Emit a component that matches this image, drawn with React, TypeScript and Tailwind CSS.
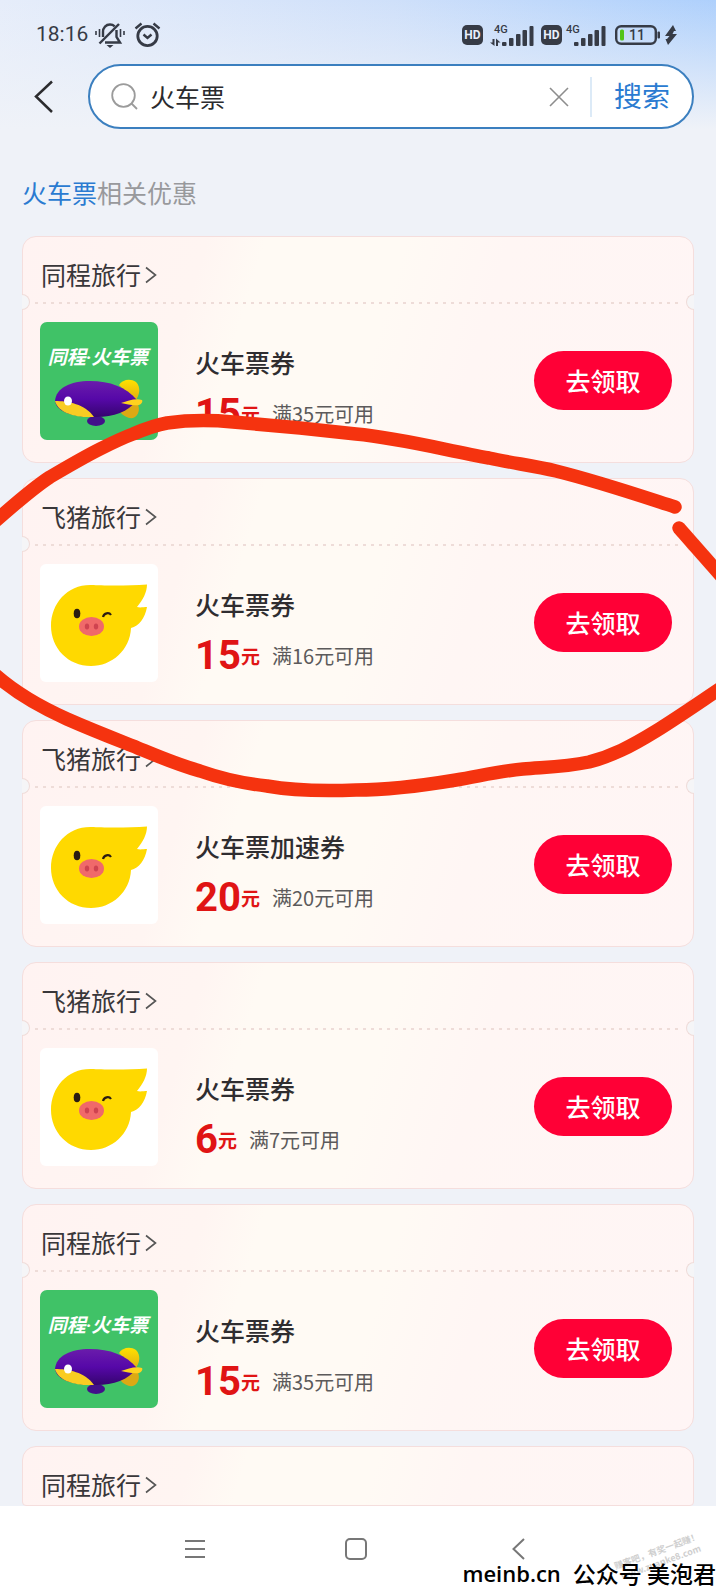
import { useState } from 'react';

type Brand = 'tongcheng' | 'fliggy';

type Coupon = {
  id: number;
  brand: Brand;
  title: string;
  amount: number;
  threshold: number;
};

const BRAND_NAMES: Record<Brand, string> = {
  tongcheng: '同程旅行',
  fliggy: '飞猪旅行',
};

const COUPONS: Coupon[] = [
  { id: 1, brand: 'tongcheng', title: '火车票券', amount: 15, threshold: 35 },
  { id: 2, brand: 'fliggy', title: '火车票券', amount: 15, threshold: 16 },
  { id: 3, brand: 'fliggy', title: '火车票加速券', amount: 20, threshold: 20 },
  { id: 4, brand: 'fliggy', title: '火车票券', amount: 6, threshold: 7 },
  { id: 5, brand: 'tongcheng', title: '火车票券', amount: 15, threshold: 35 },
];

const CARD =
  'relative border border-[#f5dedd] bg-[linear-gradient(107deg,#fff3f2_0%,#fff5f2_25%,#fffaf4_33%,#fffaf4_52%,#fff6f4_66%,#fff5f5_100%)]';

function MutedBell() {
  return (
    <svg width="30" height="26" viewBox="0 0 30 26" fill="none" stroke="#363b46" strokeWidth="2.400" aria-hidden="true">
      <path d="M8 15V10C8 5.500 11 2.500 15 2.500C17 2.500 18.500 3.200 19.700 4.300M21.500 8V15L25 20.500H10" />
      <path d="M4.500 21.500L24 2" strokeWidth="2.400" />
      <path d="M11.500 23H18.500L15 26Z" fill="#363b46" stroke="none" />
      <path d="M1 9V13M4.500 7V15M25.500 7V15M29 9V13" strokeWidth="1.600" />
    </svg>
  );
}

function AlarmIcon() {
  return (
    <svg width="27" height="26" viewBox="0 0 27 26" fill="none" stroke="#363b46" strokeWidth="2.800" aria-hidden="true">
      <circle cx="13.500" cy="14" r="9.700" />
      <path d="M9.500 12.500L13.500 16L17.500 12.500" strokeWidth="2.400" />
      <path d="M1.500 6.500L7.500 1.500M25.500 6.500L19.500 1.500" strokeWidth="2.400" />
    </svg>
  );
}

function HdBadge() {
  return (
    <span className="flex h-5 w-[21px] items-center justify-center rounded-[5px] bg-[#363b46] text-[12px] font-bold text-[#e9f0fc]">
      HD
    </span>
  );
}

function Signal({ data = false }: { data?: boolean }) {
  return (
    <svg width="44" height="24" viewBox="0 0 44 24" fill="#363b46" aria-hidden="true">
      <text x="4" y="10" fontSize="11" fontFamily="Roboto, sans-serif" fontWeight="500">
        4G
      </text>
      {data && <path d="M2.500 16H4.500V23L0 19.500H2.500ZM6 23V15.500L10.500 19.500H8V23Z" />}
      <rect x="12" y="19" width="4.500" height="4" rx="1" />
      <rect x="19" y="15" width="4.500" height="8" rx="1" />
      <rect x="26" y="11" width="4.500" height="12" rx="1" />
      <rect x="32.500" y="7" width="4.500" height="16" rx="1" />
      <rect x="39.500" y="3" width="4" height="20" rx="1" />
    </svg>
  );
}

function Battery() {
  return (
    <svg width="46" height="20" viewBox="0 0 46 20" aria-hidden="true">
      <rect x="1.200" y="1.200" width="39.600" height="17.600" rx="5" fill="none" stroke="#363b46" strokeWidth="2.400" />
      <rect x="5" y="4.500" width="4" height="11" rx="1.500" fill="#52c41a" />
      <rect x="42.500" y="6.500" width="2.500" height="7" rx="1" fill="#363b46" />
      <text x="22" y="15" fontSize="14" fontFamily="Roboto, sans-serif" fontWeight="500" textAnchor="middle" fill="#363b46">
        11
      </text>
    </svg>
  );
}

function StatusBar() {
  return (
    <div className="flex h-16 items-center justify-between pt-1.5 pr-[39px] pl-9 font-['Roboto',sans-serif] text-[#363b46]">
      <div className="flex items-center">
        <span className="w-[59px] text-[21px]">18:16</span>
        <MutedBell />
        <span className="ml-[9px]">
          <AlarmIcon />
        </span>
      </div>
      <div className="flex items-center">
        <HdBadge />
        <span className="mx-[7px]">
          <Signal data />
        </span>
        <HdBadge />
        <span className="mr-[9px]">
          <Signal />
        </span>
        <Battery />
        <svg className="ml-1" width="12" height="20" viewBox="0 0 12 20" fill="#363b46" aria-hidden="true">
          <path d="M8 0L0 11H4.500L2 14H0.500L3 20L12 9H7.500L9 6H11Z" />
        </svg>
      </div>
    </div>
  );
}

function SearchBar() {
  const [query, setQuery] = useState('火车票');

  return (
    <div className="flex items-center pr-[22px] pl-[34px]">
      <button type="button" aria-label="返回" className="w-[54px] shrink-0">
        <svg width="20" height="34" viewBox="0 0 20 34" fill="none" stroke="#2b2b2e" strokeWidth="2.500">
          <path d="M18 1.500L2 16.500L18 32" />
        </svg>
      </button>
      <form
        role="search"
        onSubmit={(e) => e.preventDefault()}
        className="flex h-[65px] min-w-0 flex-1 items-center rounded-full border-2 border-[#3b7fbf] bg-white pl-[21px]"
      >
        <svg className="shrink-0" width="27" height="27" viewBox="0 0 27 27" fill="none" stroke="#9b9b9b" strokeWidth="1.800" aria-hidden="true">
          <circle cx="12.500" cy="12.500" r="11.300" />
          <path d="M20.500 20.500L26 26" />
        </svg>
        <input
          aria-label="搜索内容"
          value={query}
          onChange={(e) => setQuery(e.target.value)}
          className="ml-3 min-w-0 flex-1 text-[25px] text-[#2b2b2e] outline-none"
        />
        <button type="button" aria-label="清除" onClick={() => setQuery('')} className="mr-[21px]">
          <svg width="20" height="20" viewBox="0 0 20 20" stroke="#8d8d8d" strokeWidth="1.600">
            <path d="M1 1L19 19M19 1L1 19" />
          </svg>
        </button>
        <button type="submit" className="h-10 border-l-2 border-[#dceaf7] pr-[22px] pb-1 pl-[22px] text-[28px] leading-9 text-[#2a7bd1]">
          搜索
        </button>
      </form>
    </div>
  );
}

function TongchengLogo() {
  return (
    <svg className="size-[118px] shrink-0" viewBox="0 0 118 118" role="img" aria-label="同程火车票">
      <defs>
        <linearGradient id="blimp" x1="0" y1="0" x2="0" y2="1">
          <stop offset="0" stopColor="#6a1cab" />
          <stop offset="0.500" stopColor="#5608a8" />
          <stop offset="1" stopColor="#35046f" />
        </linearGradient>
        <linearGradient id="fin" x1="0" y1="0" x2="0" y2="1">
          <stop offset="0" stopColor="#ffe100" />
          <stop offset="1" stopColor="#e0ad12" />
        </linearGradient>
      </defs>
      <rect width="118" height="118" rx="7" fill="#40c267" />
      <text
        x="58"
        y="42"
        textAnchor="middle"
        fontSize="19"
        fontWeight="700"
        fontStyle="italic"
        fontFamily="Roboto, 'Noto Sans CJK SC', sans-serif"
        fill="#fff"
      >
        同程·火车票
      </text>
      <path d="M79 63C82 58 90 56 96 60C101 65 100 73 95 79Z" fill="url(#fin)" />
      <path d="M80 90C86 97 94 98 97 93C100 89 99 84 97 80Z" fill="#dca914" />
      <ellipse cx="56" cy="99" rx="9" ry="5" fill="#42108a" />
      <path d="M15 79C16 66 30 59 50 59C70 59 86 65 97 78C88 90 74 95 56 95C34 95 17 91 15 79Z" fill="url(#blimp)" />
      <path d="M15 79C28 79 45 82 54 95C36 96 18 91 15 79Z" fill="#f9cc22" />
      <path d="M81 81C88 79 95 76 102 78C103 79 102 82 99 83C93 84 87 82 81 81Z" fill="#ffd21f" />
      <ellipse cx="28" cy="79" rx="4" ry="4.500" fill="#fff" />
    </svg>
  );
}

function FliggyLogo() {
  return (
    <svg className="size-[118px] shrink-0" viewBox="0 0 118 118" role="img" aria-label="飞猪">
      <rect width="118" height="118" rx="6" fill="#fff" />
      <path
        d="M11 62C11 39 28 20 52 21C60 21.500 88 22 107 20.500C107 28 103 36 97 43C100 44 104 43 107 43C105 54 99 62 91 64C90 86 72 102 51 102C28 102 11 84 11 62Z"
        fill="#ffd900"
      />
      <ellipse cx="37" cy="49.500" rx="3.300" ry="4.800" fill="#2a1c12" />
      <path d="M63 53C64 49 69 48 71 51" fill="none" stroke="#2a1c12" strokeWidth="2.200" />
      <ellipse cx="51.500" cy="62.500" rx="12.500" ry="9.500" fill="#f0696a" />
      <ellipse cx="47" cy="62.500" rx="2.200" ry="3" fill="#cf4350" />
      <ellipse cx="56" cy="62.500" rx="2.200" ry="3" fill="#cf4350" />
    </svg>
  );
}

function BrandLink({ brand }: { brand: Brand }) {
  return (
    <a href="#" className="flex h-[65px] items-center pt-[11px] pl-[18px] text-[25px] text-[#39373a]">
      {BRAND_NAMES[brand]}
      <svg className="ml-1" width="12" height="18" viewBox="0 0 12 18" fill="none" stroke="#555" strokeWidth="1.600" aria-hidden="true">
        <path d="M1 1.500L10.500 9L1 16.500" />
      </svg>
    </a>
  );
}

function CouponCard({ coupon }: { coupon: Coupon }) {
  return (
    <article className={`${CARD} rounded-[14px]`}>
      <BrandLink brand={coupon.brand} />
      <div className="mx-3 h-0.5 bg-[repeating-linear-gradient(90deg,#eedcd8_0_3px,transparent_3px_8px)]" />
      <span className="absolute top-[57px] -left-px h-4 w-2 rounded-r-full border border-l-0 border-[#efdcd9] bg-[#f5f5f7]" />
      <span className="absolute top-[57px] -right-px h-4 w-2 rounded-l-full border border-r-0 border-[#efdcd9] bg-[#f5f5f7]" />

      <div className="flex h-[158px] items-center pr-[21px] pb-[5px] pl-[17px]">
        {coupon.brand === 'fliggy' ? <FliggyLogo /> : <TongchengLogo />}
        <div className="mt-[18px] ml-[37px] flex-1">
          <h2 className="text-[25px] leading-8 font-medium text-[#2f2d30]">{coupon.title}</h2>
          <p className="mt-4 flex items-center leading-10">
            <span className="font-['Roboto',sans-serif] text-[40px] font-bold text-[#e01414]">{coupon.amount}</span>
            <span className="text-[19px] font-bold text-[#e01414]">元</span>
            <span className="ml-3 text-[20px] text-[#5c5a5b]">满{coupon.threshold}元可用</span>
          </p>
        </div>
        <button type="button" className="h-[59px] w-[138px] shrink-0 rounded-full bg-[#ff0036] text-[25px] font-medium text-white">
          去领取
        </button>
      </div>
    </article>
  );
}

function NavBar() {
  return (
    <nav className="relative h-[87px] overflow-hidden bg-white">
      <div className="flex justify-around pt-8 pr-[117px] pl-[114px]">
        <button type="button" aria-label="菜单">
          <svg width="22" height="22" viewBox="0 0 22 22" stroke="#777" strokeWidth="2">
            <path d="M1 3H21M1 11H21M1 19H21" />
          </svg>
        </button>
        <button type="button" aria-label="主页">
          <svg width="22" height="22" viewBox="0 0 22 22" fill="none" stroke="#777" strokeWidth="2">
            <rect x="1" y="1" width="20" height="20" rx="4" />
          </svg>
        </button>
        <button type="button" aria-label="后退">
          <svg width="22" height="22" viewBox="0 0 22 22" fill="none" stroke="#777" strokeWidth="2">
            <path d="M17 1L6.500 11L17 21" />
          </svg>
        </button>
      </div>
      <p className="absolute right-3 bottom-6 -rotate-[20deg] text-center text-[9px] leading-3 font-bold text-[#cfcfcf]">
        赚客吧，有奖一起赚！
        <br />
        www.zuanke8.com
      </p>
      <p className="absolute right-0 bottom-0 flex gap-3 text-[23px] leading-10 font-medium whitespace-nowrap text-black">
        <span className="font-['Open_Sans',sans-serif] text-[22px] font-semibold">meinb.cn</span>
        <span>公众号 美泡君</span>
      </p>
    </nav>
  );
}

// Freehand marker loop around the second coupon
function MarkerLoop() {
  return (
    <svg
      className="pointer-events-none absolute top-0 left-0 w-full"
      viewBox="0 0 716 1593"
      fill="none"
      stroke="#f5330f"
      strokeWidth="13.500"
      strokeLinecap="round"
      strokeLinejoin="round"
      aria-hidden="true"
    >
      <path d="M-8 524C12 507 30 490 50 477C67 467 84 457 100 449C112 443 122 438 133 434C145 429 156 425 167 423C189 420 211 420 233 422C256 424 278 426 300 428L356 434C400 438 445 450 489 458C512 463 535 466 556 471C600 482 635 494 675 507" />
      <path d="M679 528L724 579" />
      <path d="M724 686C700 702 680 716 656 731C630 747 612 756 589 762C565 767 548 767 523 769C500 771 480 776 456 780C420 786 390 790 356 790C330 791 295 791 267 786C240 783 220 778 200 771C175 764 155 755 133 746C105 735 92 730 67 719C40 707 15 693 -8 672" />
    </svg>
  );
}

export default function App() {
  return (
    <div className="relative min-h-screen overflow-hidden bg-[#eff2f8] font-['Noto_Sans_CJK_SC',sans-serif]">
      <header className="bg-[linear-gradient(180deg,transparent_0%,#eff2f8_100%),linear-gradient(90deg,#e6edfa_0%,#cfe0fa_55%,#aed0fc_100%)]">
        <StatusBar />
        <SearchBar />
      </header>
      <main className="px-[22px]">
        <h1 className="mt-[45px] mb-[26px] text-[25px] leading-9 text-[#98999c]">
          <span className="text-[#2a7bd1]">火车票</span>相关优惠
        </h1>
        <div className="flex flex-col gap-[15px]">
          {COUPONS.map((coupon) => (
            <CouponCard key={coupon.id} coupon={coupon} />
          ))}
          <article className={`${CARD} h-[60px] rounded-t-[14px] rounded-b-sm`}>
            <BrandLink brand="tongcheng" />
          </article>
        </div>
      </main>
      <NavBar />
      <MarkerLoop />
    </div>
  );
}
